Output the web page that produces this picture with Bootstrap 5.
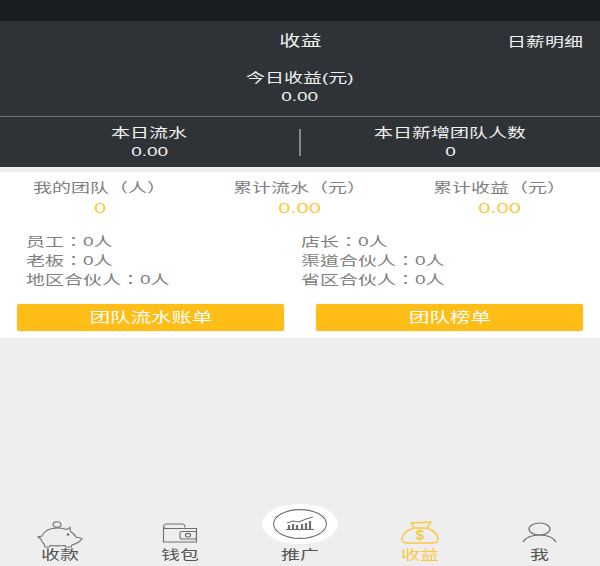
<!DOCTYPE html>
<html lang="en">
<head>
<meta charset="UTF-8">
<title>收益</title>
<link href="https://cdn.jsdelivr.net/npm/bootstrap@5.3.0/dist/css/bootstrap.min.css" rel="stylesheet">
<script src="https://cdn.jsdelivr.net/npm/bootstrap@5.3.0/dist/js/bootstrap.bundle.min.js"></script>
<style>
    html, body { height: 566px; overflow: hidden; }
    body { background: #eeeeee; font-family: "Liberation Sans", "Noto Sans CJK SC", sans-serif; display: flex; flex-direction: column; }
    .wide { display: inline-block; transform: scaleX(1.46); white-space: nowrap; }
    .status-strip { height: 21px; background: #1a1d20; }
    .dark-panel { background: #2f3337; color: #eef0f0; height: 146px; }
    .head-row { height: 42px; position: relative; font-size: 14.5px; }
    .head-link { position: absolute; right: 17px; top: 12px; font-size: 13px; line-height: 18px; }
    .head-link .wide { transform-origin: right center; }
    .today-box { height: 54px; border-bottom: 1px solid #6b6f72; font-size: 13px; line-height: 19px; padding-top: 5px; }
    .sum-row { height: 50px; font-size: 13px; line-height: 19px; }
    .sum-sep { width: 2px; height: 27px; background: #85888a; }
    .gap-strip { height: 5px; background: #eeeeee; }
    .white-panel { background: #fff; height: 166px; color: #808080; }
    .totals { font-size: 13px; line-height: 19px; padding-top: 6px; height: 52px; }
    .total-val { color: #fdc840; font-size: 15px; line-height: 22px; }
    .staff-grid { padding: 8px 0 0 26px; font-family: "Liberation Sans", "Noto Sans CJK TC", sans-serif; font-size: 13px; line-height: 19px; height: 80px; }
    .staff-col { width: 274.5px; }
    .left-text { transform-origin: left center; }
    .btn-team { background: #febd17; color: #fff; height: 27px; width: 267px; border-radius: 2px; font-size: 14px; line-height: 27px; padding: 0; border: 0; box-shadow: 0 0 2px rgba(0,0,0,.12); }
    .btn-row { padding: 0 17px; }
    .tab-fill { flex: 1; position: relative; }
    .tab-bar { position: absolute; left: 0; right: 0; bottom: 0; height: 50px; }
    .tab-item { width: 120px; height: 50px; color: #555; font-size: 13px; line-height: 16px; position: relative; }
    .tab-item svg { display: block; height: 29px; margin-top: 4px; }
    .tab-active { color: #fdc840; }
    .tab-circle { position: absolute; left: 262px; top: 504px; width: 76px; height: 40px; background: #fff; border-radius: 50%; }
    .tab-centre svg { position: absolute; left: 33px; top: -7px; width: 54px; height: 30px; margin: 0; }
    .tab-label { position: absolute; left: 0; right: 0; bottom: 3px; }
</style>
</head>
<body>
    <div class="status-strip"></div>
    <div class="dark-panel text-center">
        <div class="head-row d-flex align-items-center justify-content-center">
            <span class="wide">收益</span>
            <span class="head-link"><span class="wide">日薪明细</span></span>
        </div>
        <div class="today-box">
            <div><span class="wide">今日收益(元)</span></div>
            <div><span class="wide">0.00</span></div>
        </div>
        <div class="sum-row d-flex align-items-center">
            <div class="flex-fill w-50">
                <div><span class="wide">本日流水</span></div>
                <div><span class="wide">0.00</span></div>
            </div>
            <div class="sum-sep flex-shrink-0"></div>
            <div class="flex-fill w-50">
                <div><span class="wide">本日新增团队人数</span></div>
                <div><span class="wide">0</span></div>
            </div>
        </div>
    </div>
    <div class="gap-strip"></div>
    <div class="white-panel">
        <div class="totals row g-0 text-center">
            <div class="col-4">
                <div><span class="wide">我的团队（人）</span></div>
                <div class="total-val"><span class="wide">0</span></div>
            </div>
            <div class="col-4">
                <div><span class="wide">累计流水（元）</span></div>
                <div class="total-val"><span class="wide">0.00</span></div>
            </div>
            <div class="col-4">
                <div><span class="wide">累计收益（元）</span></div>
                <div class="total-val"><span class="wide">0.00</span></div>
            </div>
        </div>
        <div class="staff-grid d-flex">
            <div class="staff-col">
                <div><span class="wide left-text">员工：0人</span></div>
                <div><span class="wide left-text">老板：0人</span></div>
                <div><span class="wide left-text">地区合伙人：0人</span></div>
            </div>
            <div class="staff-col">
                <div><span class="wide left-text">店长：0人</span></div>
                <div><span class="wide left-text">渠道合伙人：0人</span></div>
                <div><span class="wide left-text">省区合伙人：0人</span></div>
            </div>
        </div>
        <div class="btn-row d-flex justify-content-between">
            <button class="btn btn-team"><span class="wide">团队流水账单</span></button>
            <button class="btn btn-team"><span class="wide">团队榜单</span></button>
        </div>
    </div>
    <div class="tab-fill"></div>
    <div class="tab-circle"></div>
    <div class="tab-bar d-flex text-center">
        <div class="tab-item">
            <svg viewBox="0 0 120 29" fill="none" stroke="#707070" stroke-width="1.1">
                <ellipse cx="57" cy="4.5" rx="4" ry="2.8"/>
                <path d="M38 17 L42 16 C44 11 50 8 58 8 C62 8 65 9 67 9.5 L70 7.5 L70.5 11.5 C73 13 75 15 76 17 L82 18.5 L80 21 C78 23 75 24 72 25 L71 27 L66 27 L65 25.5 C60 26 55 26 50 25.5 L49 27 L45 27 L44 24 C42 22 41 20 41 19 Z"/>
                <circle cx="68" cy="14.5" r=".8" fill="#707070"/>
            </svg>
            <div class="tab-label"><span class="wide">收款</span></div>
        </div>
        <div class="tab-item">
            <svg viewBox="0 0 120 29" fill="none" stroke="#707070" stroke-width="1.1">
                <path d="M43.5 7 C43.5 5 45 4 47 4 L62 4 C64 4 65 5 65 7.5"/>
                <path d="M43.5 7 C43.5 8 45 8.5 47 8.5 L76.5 8.5 L76.5 22 L43.5 22 Z"/>
                <rect x="60" y="11.5" width="16.5" height="7.5" rx="2"/>
                <ellipse cx="68" cy="15.2" rx="2.6" ry="1.8"/>
            </svg>
            <div class="tab-label"><span class="wide">钱包</span></div>
        </div>
        <div class="tab-item tab-centre">
            <svg viewBox="0 0 54 30" fill="none" stroke="#707070" stroke-width="1.1">
                <ellipse cx="27" cy="15" rx="26.4" ry="14.4"/>
                <path d="M14 14 L20 12 L26 13 L33 10 L40 8"/>
                <path d="M16 20 L16 16 M20 20 L20 15 M24 20 L24 16 M29 20 L29 15 M33 20 L33 14 M37 20 L37 12" stroke-width="2.2"/>
                <path d="M13 20.5 L41 20.5"/>
            </svg>
            <div class="tab-label"><span class="wide">推广</span></div>
        </div>
        <div class="tab-item tab-active">
            <svg viewBox="0 0 120 29" fill="none" stroke="#fdc840" stroke-width="1.4">
                <path d="M51 3 L71 2 L67 8 L54 8 Z"/>
                <path d="M54 8 C48 10 42 14 42 19 C42 22 45 23 48 23 L72 23 C75 23 78 22 78 19 C78 14 72 10 67 8"/>
                <text x="60" y="20" font-size="15" font-weight="700" fill="#fdc840" stroke="none" text-anchor="middle" font-family="Liberation Sans">$</text>
            </svg>
            <div class="tab-label"><span class="wide">收益</span></div>
        </div>
        <div class="tab-item">
            <svg viewBox="0 0 120 29" fill="none" stroke="#707070" stroke-width="1.2">
                <ellipse cx="59.5" cy="9" rx="10.5" ry="6"/>
                <path d="M43 22 C46 17 52 15 59.5 15 C67 15 73 17 76 22"/>
            </svg>
            <div class="tab-label"><span class="wide">我</span></div>
        </div>
    </div>
</body>
</html>
